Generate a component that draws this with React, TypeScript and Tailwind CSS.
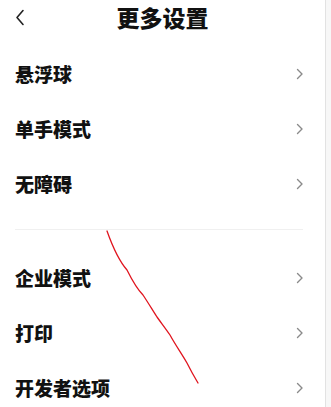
const font = { fontFamily: '"Noto Sans CJK SC", "Noto Sans", sans-serif' }

function Chevron() {
  return (
    <svg width="8" height="12" viewBox="0 0 8 12" className="text-[#8a8a8a]">
      <path d="M1.5 1.5 L6 6 L1.5 10.5" fill="none" stroke="currentColor" strokeWidth="1.4" strokeLinecap="round" strokeLinejoin="round" />
    </svg>
  )
}

function Row({ label }: { label: string }) {
  return (
    <div className="h-[55px] flex items-center justify-between pl-[15px] pr-[21px]">
      <span className="text-[19px] font-black text-[#111] leading-none">{label}</span>
      <Chevron />
    </div>
  )
}

export default function App() {
  return (
    <div className="relative w-[331px] h-[407px] overflow-hidden bg-white flex items-stretch" style={font}>
      <div className="w-[325px] shrink-0">
        {/* header */}
        <div className="h-[36px] pb-[2px] relative flex items-center justify-center">
          <svg width="10" height="17" viewBox="0 0 10 17" className="absolute left-[15px] top-[9px] text-[#222]">
            <path d="M8 1.5 L2 8.5 L8 15.5" fill="none" stroke="currentColor" strokeWidth="1.6" strokeLinecap="round" strokeLinejoin="round" />
          </svg>
          <h1 className="text-[23px] font-black text-[#111] leading-none">更多设置</h1>
        </div>

        <div className="mt-[10px]">
          <Row label="悬浮球" />
          <Row label="单手模式" />
          <Row label="无障碍" />
        </div>

        <div className="mt-[18px] ml-[15px] mr-[22px] h-px bg-[#f0f0f0]" />

        <div className="mt-[20px]">
          <Row label="企业模式" />
          <Row label="打印" />
          <Row label="开发者选项" />
        </div>
      </div>

      {/* right edge strip */}
      <div className="w-[6px] shrink-0 border-l border-[#e2e2e2] bg-[#f7f7f7]" />

      {/* hand-drawn red stroke */}
      <svg className="absolute left-0 top-0 pointer-events-none" width="331" height="407" viewBox="0 0 331 407">
        <path
          d="M107 231 C112 245 120 262 127 270 C133 282 138 290 143 295 C149 304 153 311 157 317 C162 324 166 329 170 335 C176 346 182 354 187 363 C191 371 195 378 198 383"
          fill="none"
          stroke="#e0141e"
          strokeWidth="1.3"
          strokeLinecap="round"
        />
      </svg>
    </div>
  )
}
